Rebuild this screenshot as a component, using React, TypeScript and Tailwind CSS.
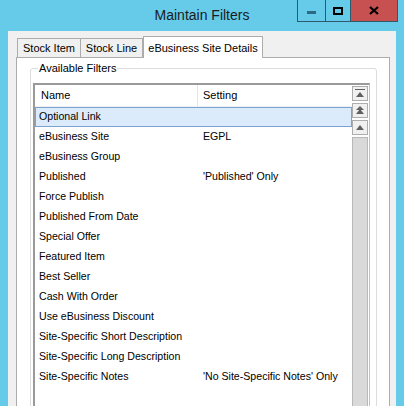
import React from 'react';

const filters: { name: string; setting: string }[] = [
  { name: 'Optional Link', setting: '' },
  { name: 'eBusiness Site', setting: 'EGPL' },
  { name: 'eBusiness Group', setting: '' },
  { name: 'Published', setting: "'Published' Only" },
  { name: 'Force Publish', setting: '' },
  { name: 'Published From Date', setting: '' },
  { name: 'Special Offer', setting: '' },
  { name: 'Featured Item', setting: '' },
  { name: 'Best Seller', setting: '' },
  { name: 'Cash With Order', setting: '' },
  { name: 'Use eBusiness Discount', setting: '' },
  { name: 'Site-Specific Short Description', setting: '' },
  { name: 'Site-Specific Long Description', setting: '' },
  { name: 'Site-Specific Notes', setting: "'No Site-Specific Notes' Only" },
  { name: '', setting: '' },
];

const ScrollButton = ({ kind }: { kind: 'top' | 'page' | 'line' }) => (
  <div className="w-[16px] h-[15px] border border-[#adadad] bg-[#f0f0f0] flex items-center justify-center">
    <svg width="12" height="11" viewBox="0 0 12 11">
      {kind === 'top' && (
        <>
          <rect x="1" y="1" width="10" height="1" fill="#606060" />
          <polygon points="6,4 10,9 2,9" fill="#606060" />
        </>
      )}
      {kind === 'page' && (
        <>
          <polygon points="6,1 10,5 2,5" fill="#606060" />
          <polygon points="6,4 10,9 2,9" fill="#606060" />
        </>
      )}
      {kind === 'line' && <polygon points="6,3 10,8 2,8" fill="#606060" />}
    </svg>
  </div>
);

const App = () => {
  return (
    <div className="w-[404px] h-[406px] overflow-hidden bg-[#65cbe9] flex flex-col font-['Liberation_Sans',Arial,sans-serif] text-[10.6px] text-black">
      {/* title bar */}
      <div className="h-[31px] shrink-0 relative flex justify-center">
        <span className="mt-[5px] text-[14px] text-[#1b1b1b]">Maintain Filters</span>
        <div className="absolute top-0 right-[6px] flex h-[22px] border border-t-0 border-[#2f5a6c]">
          <div className="w-[28px] flex items-center justify-center border-r border-[#2f5a6c]">
            <div className="w-[9px] h-[3px] mt-[4px] bg-[#2b6a84]" />
          </div>
          <div className="w-[25px] flex items-center justify-center border-r border-[#2f5a6c]">
            <div className="w-[10px] h-[8px] border-2 border-black" />
          </div>
          <div className="w-[46px] bg-[#c75050] flex items-center justify-center">
            <svg width="10" height="9" viewBox="0 0 10 9">
              <path d="M1 1 L9 8 M9 1 L1 8" stroke="#000" strokeWidth="2.2" />
            </svg>
          </div>
        </div>
      </div>

      {/* client area */}
      <div className="flex-1 ml-[8px] mr-[8px] bg-[#f0f0f0] pl-[8px] pr-[6px] pt-[5px] flex flex-col">
        {/* tabs */}
        <div className="flex items-end h-[21px] pl-[1px] relative z-10 text-[11px]">
          <div className="w-[64px] h-[19px] border border-b-0 border-[#acacac] flex items-center justify-center">
            Stock Item
          </div>
          <div className="w-[62px] h-[19px] border border-b-0 border-l-0 border-[#acacac] flex items-center justify-center">
            Stock Line
          </div>
          <div className="w-[120px] h-[22px] -mb-[1px] border border-b-0 border-[#acacac] bg-white flex items-start justify-center pt-[3px]">
            eBusiness Site Details
          </div>
        </div>

        {/* tab page */}
        <div className="flex-1 border border-[#acacac] bg-white pl-[13px] pr-[12px] pt-[4px] flex flex-col">
          <fieldset className="flex-1 border border-[#dcdcdc] rounded-[3px] pl-[2px] pr-[6px] pt-[8px] flex flex-col">
            <legend className="ml-[5px] px-[1px] leading-[13px] text-[11px]">Available Filters</legend>
            <div className="flex-1 flex border-t-2 border-l-2 border-[#9a9a9a] border-r border-r-[#c0c0c0]">
              <div className="flex-1 flex flex-col">
                <div className="h-[22px] flex items-center border-b border-[#f0f0f0] shrink-0 text-[11px]">
                  <div className="w-[163px] h-full pl-[6px] flex items-center border-r border-[#e5e5e5]">Name</div>
                  <div className="pl-[5px]">Setting</div>
                </div>
                {filters.map((f, i) => (
                  <div
                    key={i}
                    className={`h-[20px] shrink-0 flex items-center ${
                      i === 0 ? 'border border-[#7da2ce] bg-[#dcebfc]' : 'border border-transparent'
                    }`}
                  >
                    <div className="w-[162px] pl-[3px] whitespace-nowrap">{f.name}</div>
                    <div className="pl-[5px] whitespace-nowrap">{f.setting}</div>
                  </div>
                ))}
              </div>
              <div className="w-[17px] flex flex-col gap-[2px] pt-[1px] shrink-0">
                <ScrollButton kind="top" />
                <ScrollButton kind="page" />
                <ScrollButton kind="line" />
                <div className="flex-1 w-[16px] border border-[#b8b8b8] bg-[#d9d9d9]" />
              </div>
            </div>
          </fieldset>
        </div>
      </div>
    </div>
  );
};

export default App;
